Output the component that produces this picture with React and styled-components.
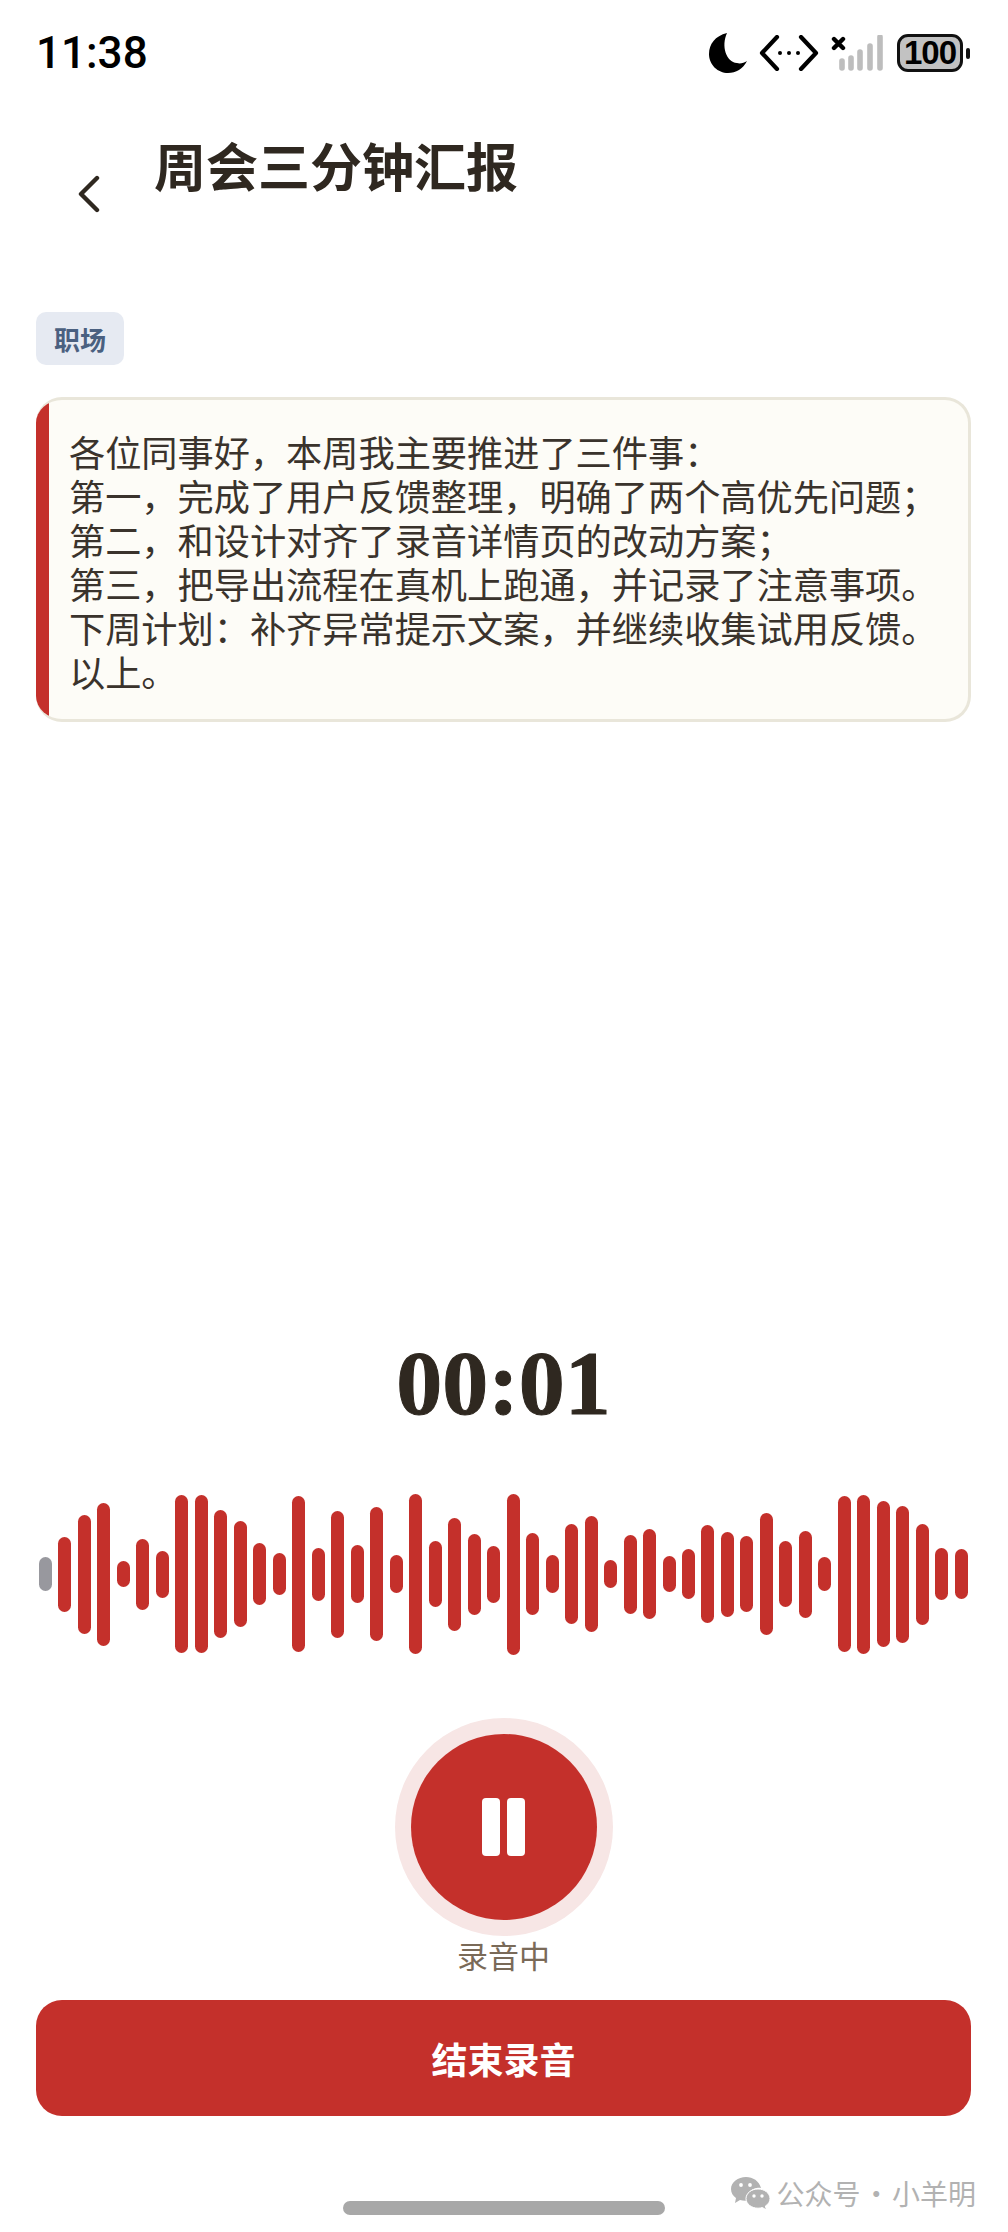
import React from "react";
import styled, { createGlobalStyle } from "styled-components";

const BARS = [
  34, 75, 119, 143, 26, 71, 47, 158, 158, 128, 106, 62, 42, 156, 53, 127, 58, 134, 38, 160, 66, 113, 81, 57,
  161, 82, 38, 100, 116, 28, 79, 90, 36, 50, 98, 85, 76, 122, 66, 87, 34, 156, 159, 146, 137, 101, 52, 50,
];

const SCRIPT = `各位同事好，本周我主要推进了三件事：
第一，完成了用户反馈整理，明确了两个高优先问题；
第二，和设计对齐了录音详情页的改动方案；
第三，把导出流程在真机上跑通，并记录了注意事项。
下周计划：补齐异常提示文案，并继续收集试用反馈。
以上。`;

const App = () => {
  return (
    <>
      <GlobalStyle />
      <Page>
        <StatusBar>
          <Clock>11:38</Clock>
          <StatusIcons>
            <svg width="38" height="40" viewBox="0 0 38 40">
              <path d="M18 0C6 3 0 11 0 21c0 11 9 19 19 19 8 0 15-4 19-12-3 2-7 3-10 2C17 29 12 13 18 0z" fill="#000" />
            </svg>
            <svg width="60" height="36" viewBox="0 0 60 36" fill="none" stroke="#000" strokeWidth="4.2" strokeLinecap="round" strokeLinejoin="round">
              <path d="M18 2 3 18l15 16" />
              <path d="M42 2l15 16-15 16" />
              <circle cx="21" cy="18" r="2" fill="#000" stroke="none" />
              <circle cx="30" cy="18" r="2" fill="#000" stroke="none" />
              <circle cx="39" cy="18" r="2" fill="#000" stroke="none" />
            </svg>
            <svg width="52" height="36" viewBox="0 0 52 36" fill="none" strokeLinecap="round">
              <path d="M3 4l9 9M12 4l-9 9" stroke="#000" strokeWidth="4.4" />
              <path d="M11 26v7M20 23v10M29 17v16M39 11v22M49 2v31" stroke="#bdbdbd" strokeWidth="5.6" />
            </svg>
            <Battery>
              <BatteryBody>100</BatteryBody>
              <BatteryNub />
            </Battery>
          </StatusIcons>
        </StatusBar>

        <Header>
          <BackButton>
            <svg width="26" height="38" viewBox="0 0 26 38" fill="none" stroke="#2f2820" strokeWidth="4.4" strokeLinecap="round" strokeLinejoin="round">
              <path d="M21 3 5 19l16 16" />
            </svg>
          </BackButton>
          <Title>周会三分钟汇报</Title>
        </Header>

        <Content>
          <Tag>职场</Tag>
          <ScriptCard>
            <Accent />
            <ScriptText>{SCRIPT}</ScriptText>
          </ScriptCard>
        </Content>

        <Recorder>
          <Timer>00:01</Timer>
          <Wave>
            {BARS.map((h, i) => (
              <Bar key={i} $idle={i === 0} style={{ height: h }} />
            ))}
          </Wave>
          <PauseButton>
            <PauseMark />
            <PauseMark />
          </PauseButton>
          <StateLabel>录音中</StateLabel>
          <StopButton>结束录音</StopButton>
        </Recorder>

        <Watermark>
          <svg width="39" height="32" viewBox="0 0 39 32" fill="#b2b2b2">
            <path d="M15 0C7 0 0 5 0 12c0 4 2 7 5 9l-1 5 5-3c2 .6 4 .8 6 .7-1-6 4-12 12-13 1 0 2 0 3 .2C28 4 22 0 15 0z" />
            <path d="M27 12c-6.600 0-12 4.300-12 9.600s5.400 9.600 12 9.600c1.600 0 3-.2 4.400-.7l4 2.500-1-4c3-1.800 4.600-4.400 4.600-7.400 0-5.300-5.400-9.600-12-9.600z" stroke="#fff" strokeWidth="1" />
            <circle cx="10" cy="8" r="1.900" fill="#fff" />
            <circle cx="19" cy="8" r="1.900" fill="#fff" />
            <circle cx="23" cy="19" r="1.700" fill="#fff" />
            <circle cx="31" cy="19" r="1.700" fill="#fff" />
          </svg>
          <span>公众号 · 小羊明</span>
        </Watermark>
        <HomeBar />
      </Page>
    </>
  );
};

const GlobalStyle = createGlobalStyle`
  html, body {
    margin: 0;
    padding: 0;
    background: #ffffff;
  }
  * {
    box-sizing: border-box;
  }
`;

const Page = styled.div`
  position: relative;
  width: 1008px;
  height: 2232px;
  overflow: hidden;
  display: flex;
  flex-direction: column;
  background: #ffffff;
  font-family: "Noto Sans CJK SC", "Noto Sans", sans-serif;
`;

const StatusBar = styled.div`
  display: flex;
  align-items: center;
  justify-content: space-between;
  height: 40px;
  margin-top: 33px;
  padding: 0 38px 0 36px;
`;

const Clock = styled.div`
  font-family: Roboto, sans-serif;
  font-size: 44px;
  font-weight: 500;
  line-height: 40px;
  color: #000000;
`;

const StatusIcons = styled.div`
  display: flex;
  align-items: center;
  gap: 12px;
`;

const Battery = styled.div`
  display: flex;
  align-items: center;
  gap: 3px;
  margin-left: 2px;
`;

const BatteryBody = styled.div`
  width: 66px;
  height: 38px;
  border: 3px solid #111111;
  border-radius: 11px;
  background: #c2c2c2;
  display: flex;
  align-items: center;
  justify-content: center;
  font-family: "Liberation Sans", sans-serif;
  font-size: 33px;
  font-weight: 700;
  letter-spacing: -1px;
  color: #000000;
`;

const BatteryNub = styled.div`
  width: 4px;
  height: 11px;
  border-radius: 2px;
  background: #111111;
`;

const Header = styled.div`
  display: flex;
  align-items: flex-start;
  margin-top: 54px;
  padding-left: 76px;
`;

const BackButton = styled.div`
  width: 26px;
  margin-top: 48px;
  display: flex;
`;

const Title = styled.h1`
  margin: 0 0 0 52px;
  font-size: 52px;
  line-height: 76px;
  font-weight: 700;
  color: #2f2820;
`;

const Content = styled.div`
  display: flex;
  flex-direction: column;
  align-items: flex-start;
  margin-top: 99px;
  padding: 0 36px;
`;

const Tag = styled.div`
  width: 88px;
  height: 53px;
  border-radius: 10px;
  background: #e6eaf2;
  display: flex;
  align-items: center;
  justify-content: center;
  font-size: 26px;
  font-weight: 700;
  color: #4a6080;
`;

const ScriptCard = styled.div`
  display: flex;
  width: 935px;
  height: 325px;
  margin-top: 32px;
  overflow: hidden;
  border: 3px solid #e9e6da;
  border-left: none;
  border-radius: 26px;
  background: #fdfcf7;
`;

const Accent = styled.div`
  flex: none;
  width: 13px;
  background: #c4302b;
`;

const ScriptText = styled.div`
  padding: 29px 0 0 20px;
  font-size: 36.2px;
  line-height: 44px;
  color: #3a332c;
  white-space: pre;
`;

const Recorder = styled.div`
  display: flex;
  flex-direction: column;
  align-items: center;
  margin-top: auto;
  padding: 0 37px 0 36px;
`;

const Timer = styled.div`
  font-family: "Liberation Serif", serif;
  font-size: 92px;
  line-height: 100px;
  font-weight: 700;
  -webkit-text-stroke: 1px #2f2820;
  color: #2f2820;
`;

const Wave = styled.div`
  width: 929px;
  height: 162px;
  margin-top: 60px;
  display: flex;
  align-items: center;
  justify-content: space-between;
`;

const Bar = styled.div`
  width: 13px;
  border-radius: 7px;
  background: ${(props) => (props.$idle ? "#98989e" : "#c4302b")};
`;

const PauseButton = styled.div`
  width: 186px;
  height: 186px;
  margin-top: 79px;
  border-radius: 50%;
  background: #c4302b;
  box-shadow: 0 0 0 16px #f7e6e5;
  display: flex;
  align-items: center;
  justify-content: center;
  gap: 7px;
`;

const PauseMark = styled.div`
  width: 18px;
  height: 58px;
  border-radius: 4px;
  background: #ffffff;
`;

const StateLabel = styled.div`
  margin-top: 13px;
  font-size: 31px;
  line-height: 44px;
  color: #7a6a58;
`;

const StopButton = styled.div`
  width: 935px;
  height: 116px;
  margin-top: 23px;
  border-radius: 26px;
  background: #c4302b;
  display: flex;
  align-items: center;
  justify-content: center;
  font-size: 36px;
  font-weight: 700;
  color: #ffffff;
`;

const Watermark = styled.div`
  position: absolute;
  right: 32px;
  bottom: 22px;
  display: flex;
  align-items: center;
  gap: 6px;
  font-size: 28px;
  line-height: 34px;
  word-spacing: -4.5px;
  color: #b2b2b2;
`;

const HomeBar = styled.div`
  flex: none;
  width: 322px;
  height: 14px;
  margin: 85px auto 17px;
  border-radius: 7px;
  background: #a8a8a8;
`;

export default App;
